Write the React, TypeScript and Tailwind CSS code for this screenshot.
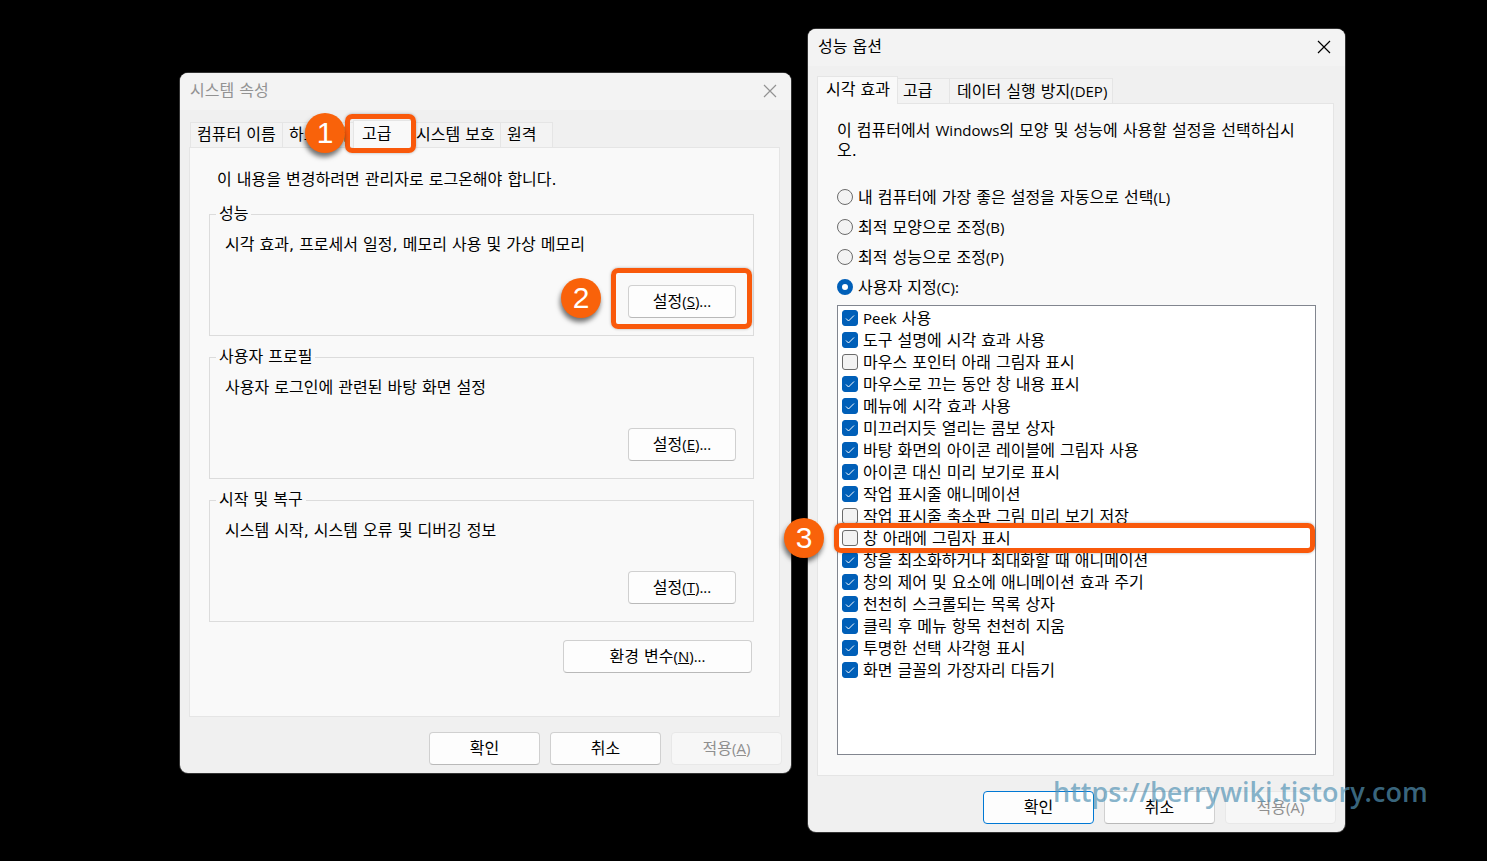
import { ReactNode } from "react";
import clsx from "clsx";

const profiles = [
   {
      title: "성능",
      description: "시각 효과, 프로세서 일정, 메모리 사용 및 가상 메모리",
      hotkey: "S",
      step: 2,
   },
   {
      title: "사용자 프로필",
      description: "사용자 로그인에 관련된 바탕 화면 설정",
      hotkey: "E",
   },
   {
      title: "시작 및 복구",
      description: "시스템 시작, 시스템 오류 및 디버깅 정보",
      hotkey: "T",
   },
];

const modes = [
   { label: "내 컴퓨터에 가장 좋은 설정을 자동으로 선택", suffix: "(L)" },
   { label: "최적 모양으로 조정", suffix: "(B)" },
   { label: "최적 성능으로 조정", suffix: "(P)" },
   { label: "사용자 지정", suffix: "(C):", checked: true },
];

const effects = [
   { prefix: "Peek", label: " 사용", checked: true },
   { label: "도구 설명에 시각 효과 사용", checked: true },
   { label: "마우스 포인터 아래 그림자 표시", checked: false },
   { label: "마우스로 끄는 동안 창 내용 표시", checked: true },
   { label: "메뉴에 시각 효과 사용", checked: true },
   { label: "미끄러지듯 열리는 콤보 상자", checked: true },
   { label: "바탕 화면의 아이콘 레이블에 그림자 사용", checked: true },
   { label: "아이콘 대신 미리 보기로 표시", checked: true },
   { label: "작업 표시줄 애니메이션", checked: true },
   { label: "작업 표시줄 축소판 그림 미리 보기 저장", checked: false },
   { label: "창 아래에 그림자 표시", checked: false, step: 3 },
   { label: "창을 최소화하거나 최대화할 때 애니메이션", checked: true },
   { label: "창의 제어 및 요소에 애니메이션 효과 주기", checked: true },
   { label: "천천히 스크롤되는 목록 상자", checked: true },
   { label: "클릭 후 메뉴 항목 천천히 지움", checked: true },
   { label: "투명한 선택 사각형 표시", checked: true },
   { label: "화면 글꼴의 가장자리 다듬기", checked: true },
];

function Latin({ children }: { children: ReactNode }) {
   return <span className="font-['Open_Sans',sans-serif] text-[15px]">{children}</span>;
}

function Badge({ step, className }: { step: number; className: string }) {
   return (
      <span
         className={clsx(
            "absolute z-20 flex size-10 items-center justify-center rounded-full bg-[#f9620a] font-['Liberation_Sans',sans-serif] text-[30px] leading-none text-white shadow-[-1px_4px_5px_rgba(0,0,0,0.55)]",
            className
         )}
      >
         {step}
      </span>
   );
}

function Outline({ className }: { className: string }) {
   return (
      <span
         className={clsx(
            "pointer-events-none absolute z-10 rounded-[7px] border-5 border-[#f9590b] shadow-[0_0_3px_rgba(0,0,0,0.3)]",
            className
         )}
      />
   );
}

function Dialog({
   title,
   inactive,
   className,
   children,
}: {
   title: string;
   inactive?: boolean;
   className: string;
   children: ReactNode;
}) {
   return (
      <section
         className={clsx(
            "relative rounded-lg bg-[#f0f0f0] px-[9px] pb-2 shadow-[0_0_0_1px_#333]",
            className
         )}
      >
         <header
            className={clsx(
               "-mx-[9px] flex h-[37px] items-center justify-between rounded-t-lg bg-[#f3f3f3] pr-[14px] pb-[2px] pl-[10px]",
               inactive ? "text-[#929292]" : "text-black"
            )}
         >
            <h1>{title}</h1>
            <button type="button" aria-label="닫기">
               <svg className="size-[14px]" viewBox="0 0 14 14" fill="none" stroke="currentColor">
                  <path d="M1 1L13 13M13 1L1 13" strokeWidth="1.2" />
               </svg>
            </button>
         </header>
         {children}
      </section>
   );
}

function Tab({
   active,
   className,
   children,
}: {
   active?: boolean;
   className: string;
   children: ReactNode;
}) {
   return (
      <button
         type="button"
         role="tab"
         aria-selected={!!active}
         className={clsx(
            "relative shrink-0 border-[#e5e5e5] text-left whitespace-nowrap",
            active
               ? "z-10 -mb-px h-[28px] border-x border-t bg-[#f9f9f9] pb-[2px]"
               : "h-[25px] border-t border-r bg-[#f3f3f3]",
            className
         )}
      >
         {children}
      </button>
   );
}

function PushButton({
   className,
   disabled,
   primary,
   children,
}: {
   className: string;
   disabled?: boolean;
   primary?: boolean;
   children: ReactNode;
}) {
   return (
      <button
         type="button"
         disabled={disabled}
         className={clsx(
            "h-[33px] rounded-[4px] border",
            primary && "border-[#0078d4] bg-[#fdfdfd]",
            disabled && "border-[#e8e8e8] bg-[#f7f7f7] text-[#8f8f8f]",
            !primary && !disabled && "border-[#d0d0d0] border-b-[#b9b9b9] bg-[#fdfdfd]",
            className
         )}
      >
         {children}
      </button>
   );
}

function SystemProperties() {
   return (
      <Dialog title="시스템 속성" inactive className="mt-[73px] w-[611px]">
         <div role="tablist" className="flex h-[37px] items-end pl-px">
            <Tab className="w-[93px] border-l pl-[6px]">컴퓨터 이름</Tab>
            <Tab className="w-[72px] pl-[6px]">하드웨어</Tab>
            <div className="relative z-10 -mx-[2px] flex">
               <Tab active className="w-[59px] pl-[8px]">
                  고급
               </Tab>
               <Outline className="-top-[6px] -left-[8px] h-[39px] w-[71px]" />
               <Badge step={1} className="-top-[7px] -left-[48px]" />
            </div>
            <Tab className="w-[91px] pl-[6px]">시스템 보호</Tab>
            <Tab className="w-[52px] pl-[6px]">원격</Tab>
         </div>

         <div
            role="tabpanel"
            className="mr-[2px] flex flex-col border border-[#e5e5e5] bg-[#f9f9f9] pt-[22px] pr-[25px] pb-[43px] pl-[19px]"
         >
            <p className="ml-2">이 내용을 변경하려면 관리자로 로그온해야 합니다.</p>
            <div className="mt-[14px] flex flex-col gap-[11px]">
               {profiles.map((profile) => (
                  <fieldset key={profile.hotkey} className="border border-[#dcdcdc] pr-[17px] pb-[17px] pl-[15px]">
                     <legend className="-ml-[9px] px-[3px]">{profile.title}</legend>
                     <p className="pt-[11px]">{profile.description}</p>
                     <div className="mt-[30px] flex justify-end">
                        <div className="relative flex">
                           <PushButton className="w-[108px]">
                              설정
                              <Latin>
                                 (<u>{profile.hotkey}</u>)...
                              </Latin>
                           </PushButton>
                           {profile.step && (
                              <>
                                 <Outline className="-top-[17px] -left-[17px] h-[61px] w-[141px]" />
                                 <Badge step={profile.step} className="-top-[7px] -left-[67px]" />
                              </>
                           )}
                        </div>
                     </div>
                  </fieldset>
               ))}
            </div>
            <PushButton className="mt-[18px] mr-[2px] w-[189px] self-end">
               환경 변수
               <Latin>
                  (<u>N</u>)...
               </Latin>
            </PushButton>
         </div>

         <footer className="mt-[15px] flex justify-end gap-[10px]">
            <PushButton className="w-[111px]">확인</PushButton>
            <PushButton className="w-[111px]">취소</PushButton>
            <PushButton className="w-[111px]" disabled>
               적용
               <Latin>
                  (<u>A</u>)
               </Latin>
            </PushButton>
         </footer>
      </Dialog>
   );
}

function PerformanceOptions() {
   return (
      <Dialog title="성능 옵션" className="mt-[29px] w-[537px]">
         <div role="tablist" className="flex h-[37px] items-end">
            <Tab active className="w-[81px] pl-[8px]">
               시각 효과
            </Tab>
            <Tab className="w-[52px] pl-[5px]">고급</Tab>
            <Tab className="w-[163px] pl-[7px]">
               데이터 실행 방지<Latin>(DEP)</Latin>
            </Tab>
         </div>

         <div
            role="tabpanel"
            className="mr-[2px] border border-[#e5e5e5] bg-[#f9f9f9] pt-4 pr-[17px] pb-5 pl-[19px]"
         >
            <p className="pr-3">
               이 컴퓨터에서 <Latin>Windows</Latin>의 모양 및 성능에 사용할 설정을 선택하십시오.
            </p>

            <div className="mt-[21px]">
               {modes.map((mode) => (
                  <label key={mode.suffix} className="flex h-[30px] items-center gap-[5px]">
                     <input
                        type="radio"
                        name="mode"
                        defaultChecked={mode.checked}
                        className="size-4 appearance-none rounded-full border border-[#6b6b6b] bg-[#f3f3f3] checked:border-5 checked:border-[#005fb8] checked:bg-white"
                     />
                     <span className="pt-px">
                        {mode.label}
                        <Latin>{mode.suffix}</Latin>
                     </span>
                  </label>
               ))}
            </div>

            <ul className="mt-[3px] border border-[#82868f] bg-white pt-px pb-[73px] pl-1">
               {effects.map((effect) => (
                  <li key={effect.label} className="relative">
                     <label className="flex h-[22px] items-center gap-[5px]">
                        <span className="relative flex">
                           <input
                              type="checkbox"
                              defaultChecked={effect.checked}
                              className="peer size-4 appearance-none rounded-[3px] border border-[#6b6b6b] bg-[#f3f3f3] checked:border-[#005fb8] checked:bg-[#005fb8]"
                           />
                           <svg
                              className="pointer-events-none absolute inset-0 hidden size-4 text-white peer-checked:block"
                              viewBox="0 0 16 16"
                              fill="none"
                              stroke="currentColor"
                           >
                              <path d="M4 8.5L6.5 11L12 5.5" />
                           </svg>
                        </span>
                        <span className="pt-px">
                           {effect.prefix && <Latin>{effect.prefix}</Latin>}
                           {effect.label}
                        </span>
                     </label>
                     {effect.step && (
                        <>
                           <Outline className="-top-1 right-0 -left-2 h-[30px]" />
                           <Badge step={effect.step} className="-top-[9px] -left-[58px]" />
                        </>
                     )}
                  </li>
               ))}
            </ul>
         </div>

         <footer className="mt-[15px] flex justify-end gap-[10px]">
            <PushButton className="w-[111px]" primary>
               확인
            </PushButton>
            <PushButton className="w-[111px]">취소</PushButton>
            <PushButton className="w-[111px]" disabled>
               적용<Latin>(A)</Latin>
            </PushButton>
         </footer>

         <a
            href="https://berrywiki.tistory.com"
            className="absolute bottom-6 left-[245px] font-['Open_Sans',sans-serif] text-[27px] leading-8 font-semibold whitespace-nowrap text-[#5493b5]/70"
         >
            https://berrywiki.tistory.com
         </a>
      </Dialog>
   );
}

export default function App() {
   return (
      <main
         lang="ko"
         className="flex min-h-screen items-start gap-[17px] bg-black pl-[180px] font-['DejaVu_Sans','Noto_Sans_CJK_KR',sans-serif] text-[16px] leading-5 text-black"
      >
         <SystemProperties />
         <PerformanceOptions />
      </main>
   );
}
